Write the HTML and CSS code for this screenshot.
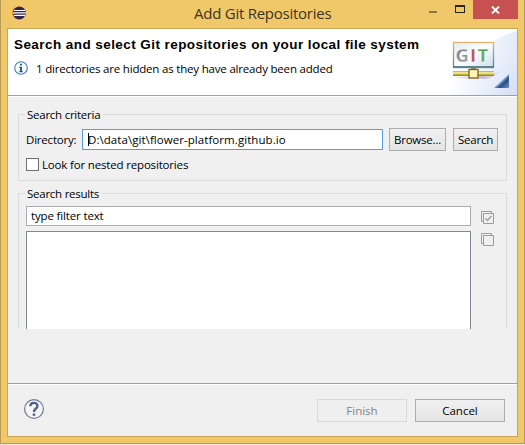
FILE: index.html
```
<!DOCTYPE html>
<html lang="en">
<head>
<meta charset="utf-8">
<title>Add Git Repositories</title>
<link rel="stylesheet" href="styles.css">
</head>
<body>
<div class="window">
  <header class="titlebar">
    <svg class="app-icon" width="14" height="14" viewBox="0 0 14 14">
      <circle cx="6.3" cy="7" r="6.3" fill="#f38b1d"/>
      <circle cx="7.4" cy="7" r="6.4" fill="#2f2553"/>
      <path d="M2 4.5h11M1 6.9h12.8M2 9.4h11" stroke="#fff" stroke-width="1.1"/>
    </svg>
    <h1 class="title"><span class="t-title">Add Git Repositories</span></h1>
    <div class="controls">
      <span class="minimize"></span>
      <span class="maximize"></span>
      <span class="close"><svg width="9" height="8" viewBox="0 0 9 8"><path d="M1 .5l7 7M8 .5l-7 7" stroke="#fff" stroke-width="1.8"/></svg></span>
    </div>
  </header>
  <main class="client">
    <section class="banner">
      <div class="banner-text">
        <h2 class="heading"><span class="t-heading">Search and select Git repositories on your local file system</span></h2>
        <p class="message">
          <svg width="14" height="14" viewBox="0 0 14 14"><circle cx="7" cy="7" r="6.3" fill="#fff" stroke="#3e7db0" stroke-width="1.1"/><path d="M6 2.7h2v1.8H6zM5 5.7h3v4.6h1v1H5v-1h1V6.7H5z" fill="#1f62a0"/></svg>
          <span class="t-message">1 directories are hidden as they have already been added</span>
        </p>
      </div>
      <svg class="art" width="75" height="66" viewBox="0 0 75 66">
        <defs>
          <linearGradient id="sky" x1="0" y1=".2" x2="1" y2=".5"><stop offset=".25" stop-color="#fff"/><stop offset="1" stop-color="#e0e8f8"/></linearGradient>
          <linearGradient id="sweep" x1="0" y1=".3" x2="1" y2=".8"><stop offset=".15" stop-color="#fff" stop-opacity="0"/><stop offset="1" stop-color="#d5dff5"/></linearGradient>
          <linearGradient id="panel" x1="0" y1="0" x2="1" y2="1"><stop offset="0" stop-color="#e3edf4"/><stop offset=".5" stop-color="#fbfdfe"/><stop offset="1" stop-color="#cddceb"/></linearGradient>
          <linearGradient id="frame" x1="0" y1="0" x2="0" y2="1"><stop offset="0" stop-color="#e5b36f"/><stop offset=".6" stop-color="#879b9b"/><stop offset="1" stop-color="#55808f"/></linearGradient>
          <linearGradient id="corner" x1="0" y1="0" x2="1" y2="1"><stop offset=".45" stop-color="#aac8e6"/><stop offset=".65" stop-color="#264d89"/><stop offset="1" stop-color="#6c98c9"/></linearGradient>
          <linearGradient id="bar" x1="0" y1="0" x2="0" y2="1"><stop offset="0" stop-color="#b7a52f"/><stop offset=".4" stop-color="#fff8b4"/><stop offset=".6" stop-color="#d7c245"/><stop offset="1" stop-color="#877c18"/></linearGradient>
          <linearGradient id="letter" x1="0" y1="0" x2="1" y2="1"><stop offset="0" stop-color="#707070"/><stop offset="1" stop-color="#a8a8a8"/></linearGradient>
          <linearGradient id="shade" x1="0" y1="0" x2="1" y2="0"><stop offset="0" stop-color="#d9cad8" stop-opacity=".4"/><stop offset=".6" stop-color="#c8bbd5"/><stop offset="1" stop-color="#d8dff2" stop-opacity="0"/></linearGradient>
        </defs>
        <path d="M75 2Q53 7 42 22Q22 42 0 66H75z" fill="url(#sky)"/>
        <path d="M75 20Q35 28 8 66H75z" fill="url(#sweep)" opacity=".8"/>
        <path d="M10 49L51 45L63 37Q58 46 45 50z" fill="url(#shade)"/>
        <rect x="11.500" y="13.500" width="40" height="25" fill="url(#panel)" stroke="url(#frame)" stroke-width="1.3"/>
        <path d="M11 38h41" stroke="#628491" stroke-width="2"/>
        <g class="git"><text x="13.500" y="33" fill="url(#letter)">G</text><text x="28" y="33" fill="#bd4b55">I</text><text x="35.500" y="33" fill="#58a362">T</text></g>
        <rect x="11" y="42" width="41" height="5" fill="url(#bar)"/>
        <path d="M29 39h5v3h-5z" fill="#8c8a48"/>
        <rect x="27" y="40.500" width="9" height="8.500" fill="#fff3ba" stroke="#806416" stroke-width="1.300"/>
        <path d="M67 45V59H52z" fill="url(#corner)"/>
      </svg>
    </section>
    <section class="content">
      <div class="group criteria">
        <span class="legend"><span class="t-criteria">Search criteria</span></span>
        <div class="row">
          <label class="dir-label"><span class="t-dir">Directory:</span></label>
          <div class="field path"><i class="caret"></i><span class="t-path">D:\data\git\flower-platform.github.io</span></div>
          <div class="button browse"><span class="t-browse">Browse...</span></div>
          <div class="button search"><span class="t-search">Search</span></div>
        </div>
        <div class="check-row"><span class="checkbox"></span><span class="t-look">Look for nested repositories</span></div>
      </div>
      <div class="group results">
        <span class="legend"><span class="t-results">Search results</span></span>
        <div class="result-grid">
          <div class="field filter"><span class="t-filter">type filter text</span></div>
          <div class="list"></div>
          <div class="tools">
            <svg width="13" height="13" viewBox="0 0 13 13" fill="none" stroke="#9c9c9c"><path d="M.5 10.500V.5h10v2M.5 10.500h2M2.500 2.500h10v10h-10z"/><path d="M4.500 7.500l2 2 4-4.500" stroke-width="1.300"/></svg>
            <svg width="13" height="13" viewBox="0 0 13 13" fill="none" stroke="#9c9c9c"><path d="M.5 10.500V.5h10v2M.5 10.500h2M2.500 2.500h10v10h-10z"/></svg>
          </div>
        </div>
      </div>
    </section>
    <footer class="footer">
      <svg class="help" width="20" height="20" viewBox="0 0 20 20"><circle cx="10" cy="10" r="9.400" fill="#f5f5f5" stroke="#6c7c96" stroke-width="1.200"/><path d="M6.300 7.200C6.500 2.800 13.700 3 13.500 7C13.400 9.700 10.100 9.400 10 13" fill="none" stroke="#4d628b" stroke-width="2.300"/><path d="M8.700 14.500h2.600v2.300H8.700z" fill="#4d628b"/></svg>
      <div class="button wide disabled"><span class="t-finish">Finish</span></div>
      <div class="button wide"><span class="t-cancel">Cancel</span></div>
    </footer>
  </main>
</div>
</body>
</html>
```
FILE: styles.css
```
* { box-sizing: border-box; }
body { margin: 0; background: #e9e9e9; font: 11.5px/16px "Open Sans", "Noto Sans", sans-serif; color: #000; overflow: hidden; }
h1, h2, p { margin: 0; font-weight: 400; }
svg { display: block; flex: none; }
span { white-space: nowrap; }

.window { width: 525px; height: 444px; padding: 0 6px 6px; background: #f0c869; border: 1px solid #b89a52; border-top: 0; }
.titlebar { height: 28px; display: flex; align-items: flex-start; padding-left: 5px; }
.app-icon { margin-top: 6px; }
.title { flex: 1; padding: 3px 0 0 168px; font-size: 15px; line-height: 21px; letter-spacing: -.25px; color: #3d3522; }
.controls { display: flex; height: 19px; }
.minimize { width: 8px; height: 2px; margin: 11px 18px 0 0; background: #8e773f; }
.maximize { width: 10px; height: 8px; margin: 5px 8px 0 0; border: 1px solid #292512; border-top-width: 2px; }
.close { width: 45px; height: 19px; background: #c75050; display: flex; align-items: center; justify-content: center; }

.client { width: 511px; height: 409px; border: 1px solid #c8a656; background: #f0f0f0; display: flex; flex-direction: column; }
.banner { height: 68px; background: #fff; border-bottom: 1px solid #fff; box-shadow: inset 0 -1px #a0a0a0; display: flex; justify-content: space-between; }
.banner-text { padding: 8px 0 0 6px; }
.heading { font: bold 13.5px/16px "Liberation Sans", sans-serif; }
.t-heading { letter-spacing: .43px; }
.message { display: flex; gap: 8px; margin-top: 8px; line-height: 16px; }
.t-message { letter-spacing: -.19px; }

.content { flex: 1; padding: 17px 10px 0; }
.group { border: 1px solid #dcdcdc; display: flex; flex-direction: column; padding: 0 7px; }
.legend { align-self: flex-start; background: #f0f0f0; height: 16px; margin: -8px 0 0 -1px; padding: 0 3px 0 2px; }
.t-criteria, .t-results, .t-search { letter-spacing: -.25px; }
.criteria { height: 67px; margin-bottom: 12px; }
.row { display: flex; align-items: center; height: 23px; margin-top: 5px; }
.dir-label { width: 56px; }
.t-dir { letter-spacing: -.2px; }
.field { background: #fff; border: 1px solid #abadb3; display: flex; align-items: center; }
.path { width: 301px; height: 21px; border-color: #569de5; padding-left: 5px; }
.t-path { letter-spacing: .06px; }
.caret { width: 1px; height: 13px; background: #000; margin-right: -1px; }
.button { height: 23px; border: 1px solid #acacac; background: linear-gradient(#f0f0f0, #e5e5e5); display: flex; align-items: center; justify-content: center; }
.browse { width: 57px; margin-left: 6px; }
.t-browse { letter-spacing: -.2px; }
.search { width: 45px; margin-left: 7px; }
.check-row { display: flex; align-items: center; gap: 3px; height: 15px; margin-top: 6px; }
.t-look { letter-spacing: -.17px; }
.checkbox { width: 13px; height: 13px; border: 1px solid #707070; background: #fff; }

.results { height: 136px; border-bottom: 0; }
.result-grid { display: grid; grid-template: 20px 98px / 445px 13px; gap: 5px 10px; margin-top: 4px; }
.filter { padding-left: 4px; }
.t-filter { letter-spacing: -.15px; }
.list { background: #fff; border: 1px solid #828790; border-bottom: 0; }
.tools { grid-area: 1 / 2 / 3 / 3; display: flex; flex-direction: column; gap: 9px; padding-top: 5px; }

.footer { height: 53px; border-top: 1px solid #a0a0a0; box-shadow: inset 0 1px #fff; display: flex; padding: 15px 12px 0 16px; gap: 8px; }
.help { margin-right: auto; }
.wide { width: 90px; }
.disabled { border-color: #d9d9d9; background: #efefef; color: #838383; }
.git { font: bold 18.5px "Open Sans", sans-serif; stroke: #fff; stroke-width: .3px; }
```
